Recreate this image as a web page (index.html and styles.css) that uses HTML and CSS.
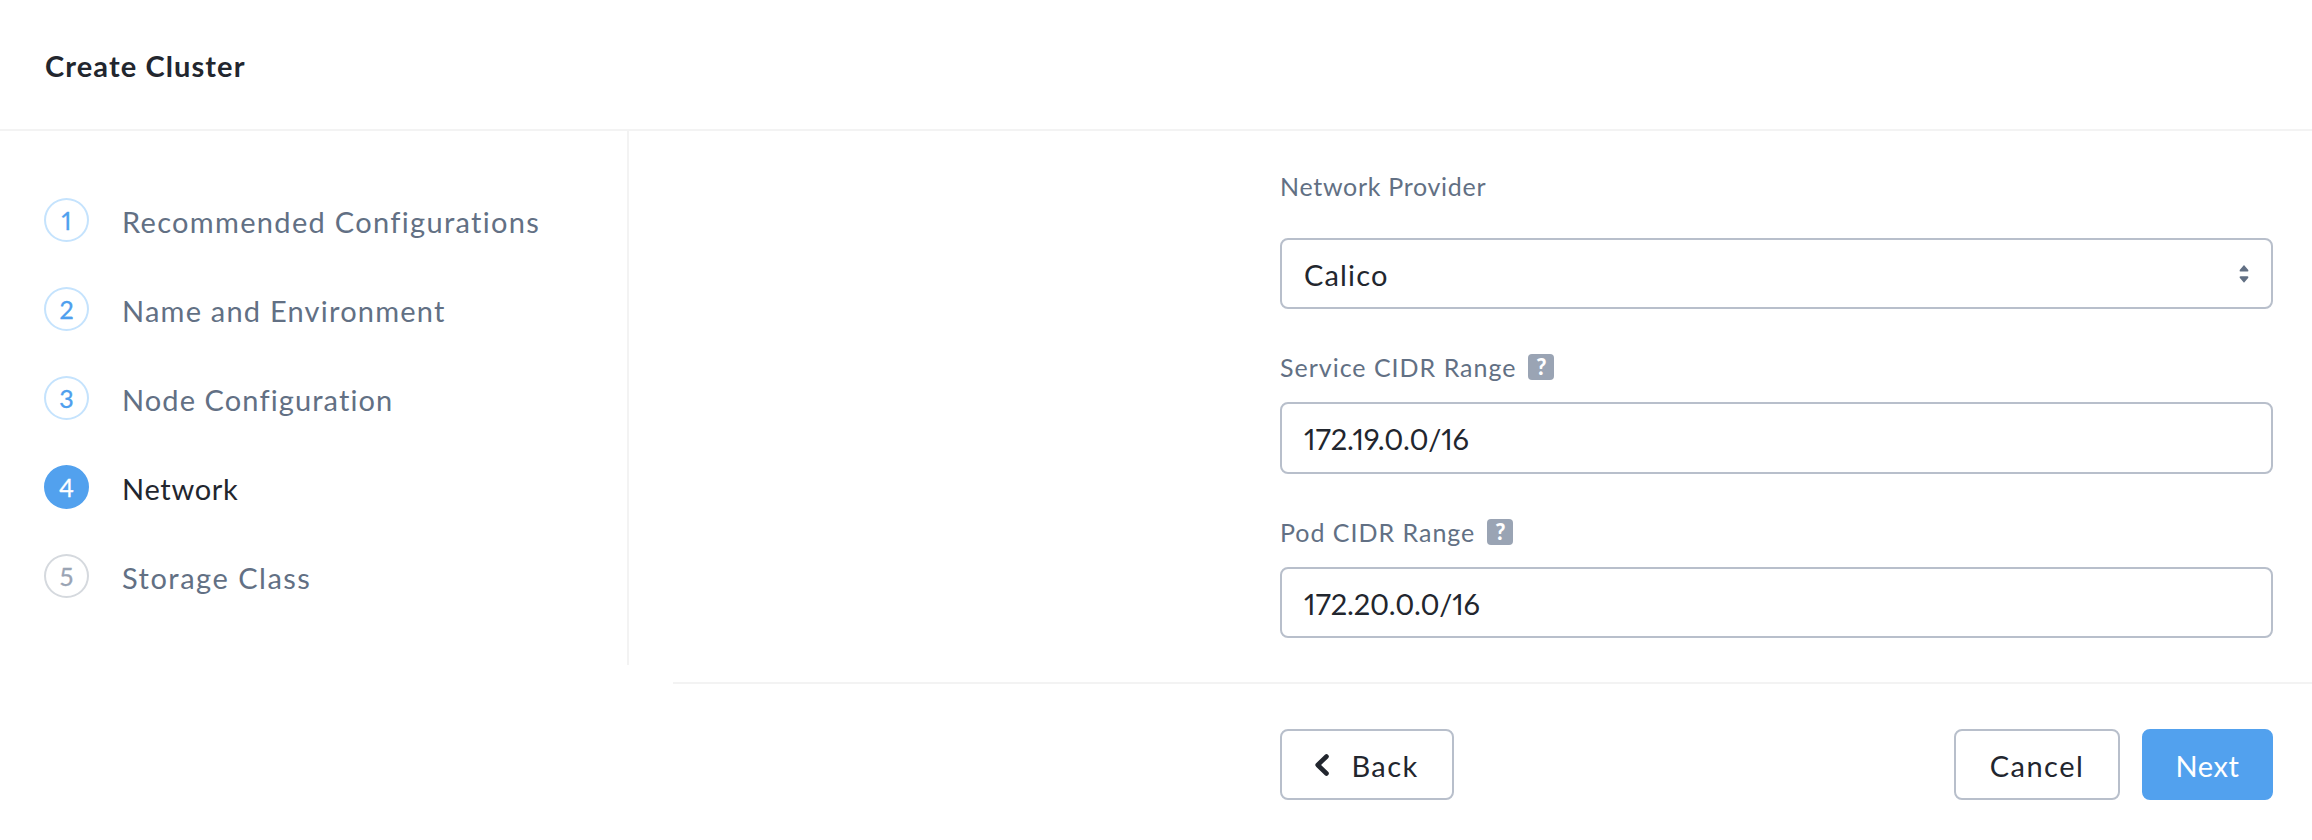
FILE: index.html
```html
<!DOCTYPE html>
<html lang="en">
<head>
<meta charset="utf-8">
<title>Create Cluster</title>
<link rel="stylesheet" href="styles.css">
</head>
<body>
<header class="header"><h1 class="title">Create Cluster</h1></header>
<div class="body">
  <nav class="steps">
    <div class="step done"><span class="num">1</span><span class="step-label s1">Recommended Configurations</span></div>
    <div class="step done"><span class="num">2</span><span class="step-label s2">Name and Environment</span></div>
    <div class="step done"><span class="num">3</span><span class="step-label s3">Node Configuration</span></div>
    <div class="step active"><span class="num">4</span><span class="step-label s4">Network</span></div>
    <div class="step"><span class="num">5</span><span class="step-label s5">Storage Class</span></div>
  </nav>
  <main class="main">
    <form class="form">
      <div class="label provider"><span class="l1">Network Provider</span></div>
      <div class="field select"><span class="value v1">Calico</span>
        <svg class="arrows" width="10" height="18" viewBox="0 0 10 18"><path d="M5 0 9.300 5Q9.800 6.500 8.500 6.500H1.500Q.2 6.500.7 5ZM5 17.800 9.300 12.800Q9.800 11.300 8.500 11.300H1.500Q.2 11.300.7 12.800Z"/></svg>
      </div>
      <div class="label service"><span class="l2">Service CIDR Range</span><span class="help">?</span></div>
      <div class="field tall"><span class="value v2">172.19.0.0/16</span></div>
      <div class="label pod"><span class="l3">Pod CIDR Range</span><span class="help">?</span></div>
      <div class="field"><span class="value v3">172.20.0.0/16</span></div>
    </form>
    <footer class="footer">
      <div class="button back"><svg width="14" height="22" viewBox="0 0 14 22"><path d="M11.500 2.500 2.700 11l8.800 8.500"/></svg><span class="value b1">Back</span></div>
      <div class="button cancel"><span class="value b2">Cancel</span></div>
      <div class="button next"><span class="value b3">Next</span></div>
    </footer>
  </main>
</div>
</body>
</html>
```
FILE: styles.css
```css
* { box-sizing: border-box; }
body { margin: 0; width: 2312px; height: 840px; overflow: hidden; background: #fff; color: #22262e; font: 29px/34px Lato, sans-serif; font-variant-numeric: proportional-nums; white-space: nowrap; }
.header { height: 131px; padding: 49px 45px 0; border-bottom: 2px solid #f3f3f3; }
.title { margin: 0; font-size: 29px; line-height: 34px; font-weight: 700; letter-spacing: 1.1px; }
.body { display: flex; align-items: flex-start; }
.steps { width: 629px; height: 534px; padding: 67px 0 0 44px; border-right: 2px solid #f3f3f3; display: flex; flex-direction: column; gap: 45px; }
.step { display: flex; height: 44px; gap: 33px; color: #627084; }
.num { width: 45px; height: 44px; border: 2px solid #d5d9de; border-radius: 50%; color: #9aa4b4; font-size: 25px; line-height: 41px; text-align: center; -webkit-text-stroke: .3px; }
.step-label { padding-top: 7px; }
.s1 { letter-spacing: 1.32px; }
.s2 { letter-spacing: 1.22px; }
.s3 { letter-spacing: 1.1px; }
.s4 { letter-spacing: .7px; }
.s5 { letter-spacing: 1.5px; }
.done .num { border-color: #c5e3fd; color: #4f9fee; }
.active { color: #22262e; }
.active .num { border-color: #52a1ee; background: #52a1ee; color: #fff; }
.main { flex: 1; margin-left: 44px; }
.form { height: 551px; padding: 40px 39px 0 607px; }
.label { display: flex; font-size: 25px; line-height: 30px; color: #627084; gap: 12px; }
.l1 { letter-spacing: .7px; }
.l2 { letter-spacing: .99px; }
.l3 { letter-spacing: .98px; }
.provider { height: 67px; }
.service { height: 93px; padding-top: 43px; }
.pod { height: 93px; padding-top: 43px; }
.help { width: 26px; height: 26px; margin-top: 2px; border-radius: 4px; background: #9aa4b4; color: #fff; font-size: 22px; line-height: 26px; font-weight: 900; text-align: center; }
.field { height: 71px; padding: 0 22px; border: 2px solid #b8bfcb; border-radius: 8px; display: flex; align-items: center; justify-content: space-between; }
.select { padding-right: 22px; }
.value { padding-top: 2px; }
.v1 { letter-spacing: 1.15px; }
.v2, .v3 { letter-spacing: -.1px; }
.tall { height: 72px; }
.arrows { fill: #627084; }
.footer { border-top: 2px solid #f3f3f3; padding: 45px 39px 0 607px; display: flex; }
.button { height: 71px; border: 2px solid #b8bfcb; border-radius: 8px; display: flex; align-items: center; justify-content: center; }
.back { width: 174px; gap: 22px; margin-right: auto; }
.back svg { fill: none; stroke: #22262e; stroke-width: 4.6; stroke-linecap: round; stroke-linejoin: round; }
.b1 { letter-spacing: 1.4px; }
.b2 { letter-spacing: 1.5px; }
.b3 { letter-spacing: .6px; }
.cancel { width: 166px; margin-right: 22px; }
.next { width: 131px; background: #52a1ee; border-color: #52a1ee; color: #fff; }
```
